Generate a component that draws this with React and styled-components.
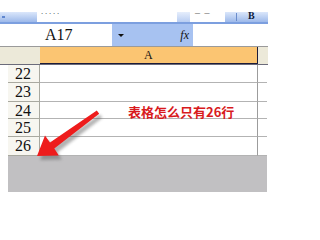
import React from "react";
import styled, { createGlobalStyle } from "styled-components";

const Global = createGlobalStyle`
  html, body { margin: 0; padding: 0; background: #fff; }
  body { font-family: "Liberation Sans", Arial, sans-serif; }
`;

const Page = styled.div`
  position: relative;
  width: 294px;
  height: 203px;
  overflow: hidden;
  background: #fff;
`;

const Screen = styled.div`
  width: 268px;
  padding-top: 12px;
  display: flex;
  flex-direction: column;
`;

const Toolbar = styled.div`
  height: 10px;
  display: flex;
  border-bottom: 2px solid #7c9fdf;
  background: linear-gradient(#dbe7fb, #9db9ea);
`;

const ToolBlock = styled.div`
  width: ${(p) => p.$w}px;
  display: flex;
  align-items: flex-start;
  background: ${(p) => (p.$light ? "linear-gradient(#e6eefc, #b8cdf2)" : "transparent")};
`;

const ToolInput = styled.div`
  width: ${(p) => p.$w}px;
  height: 10px;
  background: #fff;
  font-family: "Liberation Sans", sans-serif;
  font-size: 9px;
  line-height: 10px;
  color: #333;
  padding-left: ${(p) => p.$pad}px;
  box-sizing: border-box;
  letter-spacing: 1px;
  white-space: nowrap;
`;

const Dot = styled.span`
  display: block;
  width: 3px;
  height: 2px;
  margin: 4px 0 0 2px;
  background: #5f86cf;
`;

const Sep = styled.span`
  display: block;
  width: 1px;
  height: 8px;
  margin: 1px 0 0 11px;
  background: #6a8ccc;
`;

const BoldGlyph = styled.span`
  display: block;
  margin: 0 0 0 11px;
  font-family: "Liberation Serif", serif;
  font-weight: bold;
  font-size: 10px;
  line-height: 8px;
  color: #0d1a3a;
`;

const FormulaBar = styled.div`
  height: 22px;
  display: flex;
  border-bottom: 1px solid #9a9a9a;
`;

const NameBox = styled.div`
  width: 112px;
  background: #fff;
  font-family: "Liberation Serif", serif;
  font-size: 16px;
  line-height: 22px;
  padding-left: 45px;
  box-sizing: border-box;
  color: #111;
`;

const FxArea = styled.div`
  width: 81px;
  background: #a7c2f1;
  display: flex;
  align-items: center;
  justify-content: space-between;
  padding: 0 4px 0 6px;
  box-sizing: border-box;
`;

const DropArrow = styled.span`
  width: 0;
  height: 0;
  border-left: 3px solid transparent;
  border-right: 3px solid transparent;
  border-top: 3px solid #111;
`;

const Fx = styled.span`
  font-family: "Liberation Serif", serif;
  font-style: italic;
  font-size: 12px;
  color: #111;
`;

const FormulaInput = styled.div`
  flex: 1;
  background: #fff;
`;

const HeaderRow = styled.div`
  height: 17px;
  display: flex;
  border-bottom: 1px solid #6b6b7a;
`;

const Corner = styled.div`
  width: 40px;
  background: #ece9d9;
`;

const ColHead = styled.div`
  width: ${(p) => p.$w}px;
  background: ${(p) => (p.$active ? "#fbc572" : "#ece9d9")};
  border-right: ${(p) => (p.$active ? "1px solid #1c1c3a" : "none")};
  box-shadow: ${(p) => (p.$active ? "inset 0 -1px 0 #1c1c3a" : "none")};
  display: flex;
  align-items: center;
  justify-content: center;
  font-family: "Liberation Serif", serif;
  font-size: 12px;
  color: #111;
`;

const Row = styled.div`
  height: ${(p) => p.$h}px;
  display: flex;
  margin-left: 8px;
`;

const RowHead = styled.div`
  width: 32px;
  box-sizing: border-box;
  background: #f7f6f0;
  border-bottom: 1px solid #a9a9a0;
  border-right: 1px solid #a9a9a0;
  font-family: "Liberation Serif", serif;
  font-size: 16px;
  line-height: 18px;
  padding-left: 7px;
  color: #111;
`;

const Cell = styled.div`
  width: ${(p) => p.$w}px;
  box-sizing: border-box;
  background: #fff;
  border-bottom: 1px solid #b3b3b3;
  border-right: ${(p) => (p.$edge ? "1px solid #9c9c9c" : "none")};
`;

const Blank = styled.div`
  height: 36px;
  margin-left: 8px;
  width: 259px;
  background: #c1c0c2;
`;

const Note = styled.div`
  position: absolute;
  left: 128px;
  top: 103px;
  font-family: "Noto Sans CJK SC", sans-serif;
  font-weight: bold;
  font-size: 13px;
  line-height: 17px;
  color: #d81a1d;
`;

const Overlay = styled.svg`
  position: absolute;
  left: 0;
  top: 0;
  pointer-events: none;
`;

const rows = [
  { n: 22, h: 18 },
  { n: 23, h: 19 },
  { n: 24, h: 17 },
  { n: 25, h: 18 },
  { n: 26, h: 19 },
];

const arrow =
  "M37,156 L45,135.5 L50,142.5 L96.8,110.5 L99.2,113.7 L54.3,148.5 L58.8,155.5 Z";

export default function App() {
  return (
    <Page>
      <Global />
      <Screen>
        <Toolbar>
          <ToolBlock $w={37}>
            <Dot />
          </ToolBlock>
          <ToolInput $w={140} $pad={4}>˙˙˙˙˙</ToolInput>
          <ToolBlock $w={13} $light />
          <ToolInput $w={35} $pad={5}>¯ ¯</ToolInput>
          <ToolBlock $w={43}>
            <Sep />
            <BoldGlyph>B</BoldGlyph>
          </ToolBlock>
        </Toolbar>
        <FormulaBar>
          <NameBox>A17</NameBox>
          <FxArea>
            <DropArrow />
            <Fx>fx</Fx>
          </FxArea>
          <FormulaInput />
        </FormulaBar>
        <HeaderRow>
          <Corner />
          <ColHead $w={218} $active>A</ColHead>
          <ColHead $w={10} />
        </HeaderRow>
        {rows.map((r) => (
          <Row key={r.n} $h={r.h}>
            <RowHead>{r.n}</RowHead>
            <Cell $w={218} $edge />
            <Cell $w={9} />
          </Row>
        ))}
        <Blank />
      </Screen>
      <Note>表格怎么只有26行</Note>
      <Overlay width="294" height="203" viewBox="0 0 294 203">
        <defs>
          <filter id="sh" x="-20%" y="-20%" width="140%" height="140%">
            <feGaussianBlur stdDeviation="1.5" />
          </filter>
        </defs>
        <path d={arrow} fill="#555" opacity="0.45" transform="translate(3,4)" filter="url(#sh)" />
        <path d={arrow} fill="#ee1c1c" />
      </Overlay>
    </Page>
  );
}
